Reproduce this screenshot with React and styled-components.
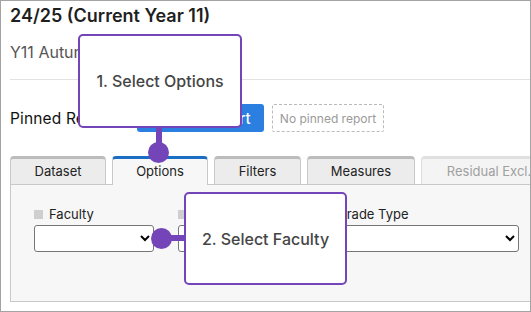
import React from "react";
import styled, { createGlobalStyle } from "styled-components";

const Global = createGlobalStyle`
  html, body { margin: 0; padding: 0; background: #fff; }
  body { font-family: Inter, "Noto Sans", sans-serif; }
  * { box-sizing: border-box; }
`;

const Frame = styled.div`
  position: relative;
  width: 531px;
  height: 312px;
  border: 1px solid #a3a3a3;
  overflow: hidden;
  background: #fff;
`;

const Content = styled.div`
  width: 640px;
  padding: 3px 0 0 9px;
`;

const Title = styled.h1`
  margin: 0;
  font-size: 18px;
  line-height: 24px;
  font-weight: 600;
  color: #1f1f1f;
`;

const Subtitle = styled.div`
  margin-top: 14px;
  font-size: 16px;
  line-height: 20px;
  color: #555;
`;

const Rule = styled.hr`
  margin: 17px 0 0 0;
  border: none;
  border-top: 1px solid #e2e2e2;
`;

const PinnedRow = styled.div`
  display: flex;
  align-items: center;
  margin-top: 24px;
  height: 28px;
`;

const PinnedLabel = styled.span`
  width: 127px;
  font-size: 15.5px;
  letter-spacing: 0.15px;
  color: #111;
`;

const PrimaryButton = styled.button`
  width: 127px;
  height: 28px;
  border: none;
  border-radius: 3px;
  background: #2b7fe0;
  color: #fff;
  font-family: inherit;
  font-size: 15px;
  font-weight: 500;
`;

const EmptyPin = styled.div`
  margin-left: 8px;
  width: 112px;
  height: 28px;
  display: flex;
  align-items: center;
  justify-content: center;
  border: 1px dashed #bbb;
  border-radius: 2px;
  font-size: 12px;
  color: #9a9a9a;
`;

const TabRow = styled.div`
  display: flex;
  gap: 6px;
  margin-top: 24px;
`;

const Tab = styled.div`
  position: relative;
  z-index: 1;
  flex: none;
  width: ${(p) => p.$w}px;
  height: ${(p) => (p.$active ? "29px" : "28px")};
  margin-bottom: ${(p) => (p.$active ? "-1px" : "0")};
  padding-bottom: ${(p) => (p.$active ? "3px" : "2px")};
  display: flex;
  align-items: center;
  justify-content: center;
  white-space: nowrap;
  border: 1px solid ${(p) => (p.$disabled ? "#dcdcdc" : "#c9c9c9")};
  border-bottom: none;
  border-top: 3px solid
    ${(p) => (p.$active ? "#1b6ec4" : p.$disabled ? "#e0e0e0" : "#bcbcbc")};
  border-radius: 4px 4px 0 0;
  background: ${(p) =>
    p.$active ? "#f7f7f7" : p.$disabled ? "#f4f4f4" : "#ececec"};
  color: ${(p) => (p.$disabled ? "#a0a0a0" : "#222")};
  font-size: 13px;
`;

const Panel = styled.div`
  height: 118px;
  border: 1px solid #c9c9c9;
  background: #f7f7f7;
  padding: 21px 0 0 23px;
  display: flex;
  gap: 24px;
`;

const Field = styled.div`
  width: ${(p) => p.$w}px;
  display: flex;
  flex-direction: column;
  gap: 3px;
`;

const FieldLabel = styled.label`
  display: flex;
  align-items: flex-start;
  gap: 6px;
  font-size: 13px;
  line-height: 16px;
  color: #222;
`;

const Check = styled.span`
  width: 9px;
  height: 9px;
  margin-top: 4px;
  background: #cfcfcf;
`;

const Select = styled.select`
  width: 100%;
  height: 27px;
  border: 1px solid #767676;
  border-radius: 3px;
  background: #fff;
  font-family: inherit;
  font-size: 13px;
`;

const Callout = styled.div`
  position: absolute;
  left: ${(p) => p.$x}px;
  top: ${(p) => p.$y}px;
  width: ${(p) => p.$w}px;
  height: ${(p) => p.$h}px;
  border: 2px solid #7445b8;
  border-radius: 5px;
  background: #fff;
  display: flex;
  align-items: center;
  justify-content: center;
  font-size: 16px;
  font-weight: 500;
  color: #454545;
  z-index: 5;
`;

const Stem = styled.div`
  position: absolute;
  left: ${(p) => p.$x}px;
  top: ${(p) => p.$y}px;
  width: ${(p) => p.$w}px;
  height: ${(p) => p.$h}px;
  background: #7445b8;
  z-index: 5;
`;

const Dot = styled.div`
  position: absolute;
  left: ${(p) => p.$cx - 10.5}px;
  top: ${(p) => p.$cy - 10.5}px;
  width: 21px;
  height: 21px;
  border-radius: 50%;
  background: #7445b8;
  z-index: 6;
`;

export default function App() {
  return (
    <>
      <Global />
      <Frame>
        <Content>
          <Title>24/25 (Current Year 11)</Title>
          <Subtitle>Y11 Autumn Mocks</Subtitle>
          <Rule />
          <PinnedRow>
            <PinnedLabel>Pinned Reports</PinnedLabel>
            <PrimaryButton>Pin this report</PrimaryButton>
            <EmptyPin>No pinned report</EmptyPin>
          </PinnedRow>
          <TabRow>
            <Tab $w={96}>Dataset</Tab>
            <Tab $w={96} $active>
              Options
            </Tab>
            <Tab $w={87}>Filters</Tab>
            <Tab $w={108}>Measures</Tab>
            <Tab $w={136} $disabled>
              Residual Excl.
            </Tab>
          </TabRow>
          <Panel>
            <Field $w={120}>
              <FieldLabel>
                <Check />
                Faculty
              </FieldLabel>
              <Select>
                <option></option>
              </Select>
            </Field>
            <Field $w={120}>
              <FieldLabel>
                <Check />
                Subject
              </FieldLabel>
              <Select>
                <option></option>
              </Select>
            </Field>
            <Field $w={197}>
              <FieldLabel>
                <Check />
                Grade Type
              </FieldLabel>
              <Select>
                <option></option>
              </Select>
            </Field>
          </Panel>
        </Content>

        <Callout $x={77} $y={33} $w={164} $h={94}>
          1. Select Options
        </Callout>
        <Stem $x={155} $y={126} $w={6} $h={26} />
        <Dot $cx={157.5} $cy={151.5} />

        <Callout $x={183} $y={191} $w={163} $h={93}>
          2. Select Faculty
        </Callout>
        <Stem $x={165} $y={234} $w={20} $h={6} />
        <Dot $cx={160.5} $cy={237.5} />
      </Frame>
    </>
  );
}
